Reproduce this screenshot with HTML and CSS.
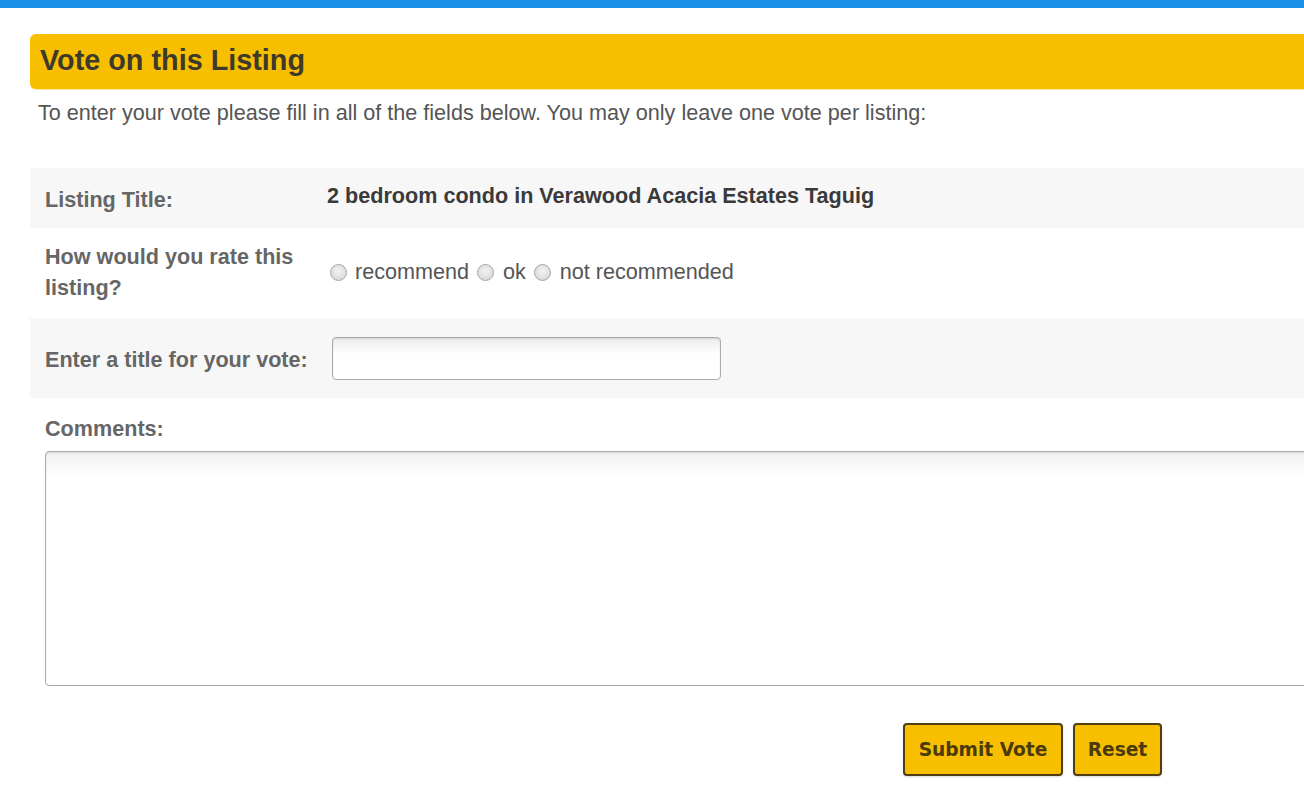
FILE: index.html
```html
<!DOCTYPE html>
<html>
<head>
<meta charset="utf-8">
<link rel="stylesheet" href="styles.css">
</head>
<body>
<div class="topbar"></div>
<div class="page">
  <h2 class="heading">Vote on this Listing</h2>
  <p class="intro">To enter your vote please fill in all of the fields below. You may only leave one vote per listing:</p>
  <form class="form">
    <div class="row row-shade row-title">
      <div class="label">Listing Title:</div>
      <div class="value value-title">2 bedroom condo in Verawood Acacia Estates Taguig</div>
    </div>
    <div class="row row-rate">
      <div class="label">How would you rate this listing?</div>
      <div class="value radios">
        <label class="radio"><span class="dot"></span>recommend</label>
        <label class="radio"><span class="dot"></span>ok</label>
        <label class="radio"><span class="dot"></span>not recommended</label>
      </div>
    </div>
    <div class="row row-shade row-input">
      <div class="label">Enter a title for your vote:</div>
      <div class="value"><div class="textbox"></div></div>
    </div>
    <div class="comments">
      <div class="label">Comments:</div>
      <div class="textarea"></div>
    </div>
    <div class="buttons">
      <button type="button" class="btn btn-submit">Submit Vote</button>
      <button type="button" class="btn btn-reset">Reset</button>
    </div>
  </form>
</div>
</body>
</html>
```

FILE: styles.css
```css
html, body {
  margin: 0;
  padding: 0;
  overflow: hidden;
  background: #ffffff;
}
body {
  width: 1304px;
  height: 794px;
  font-family: "Liberation Sans", Arial, sans-serif;
  color: #555555;
}
.topbar {
  height: 8px;
  background: #1a90e6;
}
.page {
  width: 1400px;
  padding: 26px 0 0 30px;
}
.heading {
  margin: 0;
  height: 55px;
  line-height: 53px;
  background: #f8bf00;
  border-radius: 6px 0 0 6px;
  padding-left: 10px;
  font-size: 28.8px;
  font-weight: bold;
  color: #3d3a2c;
  box-shadow: 0 1px 0 #fbe9a8;
}
.intro {
  margin: 11px 0 0 8px;
  font-size: 21.6px;
  line-height: 26px;
  color: #555;
}
.form {
  margin-top: 42px;
}
.row {
  display: grid;
  grid-template-columns: 297px 1fr;
  align-items: center;
}
.row-shade {
  background: #f7f7f7;
}
.row-title { height: 60px; }
.row-rate { height: 90px; }
.row-input { height: 80px; }
.label {
  padding-left: 15px;
  font-size: 21.6px;
  font-weight: bold;
  color: #666;
  line-height: 31px;
}
.row-title .label { padding-top: 2px; }
.row-rate .label { width: 262px; padding-bottom: 3px; }
.row-input .label { padding-top: 2px; }
.value-title {
  font-size: 21.6px;
  font-weight: bold;
  color: #3a3a3a;
  padding-bottom: 5px;
}
.radios {
  display: flex;
  align-items: center;
  font-size: 21.6px;
  color: #555;
  padding-left: 3px;
  padding-bottom: 2px;
}
.radio {
  display: flex;
  align-items: center;
}
.dot {
  width: 17px;
  height: 17px;
  border-radius: 50%;
  border: 1px solid #a4a4a4;
  background: radial-gradient(circle at 50% 40%, #f3f3f3 0%, #dcdcdc 70%, #c8c8c8 100%);
  margin-right: 8px;
  box-sizing: border-box;
}
.radio + .radio .dot { margin-left: 8px; margin-right: 9px; }
.textbox {
  margin-left: 5px;
  width: 389px;
  height: 43px;
  box-sizing: border-box;
  border: 1px solid #ababab;
  border-radius: 4px;
  background: linear-gradient(#ececec, #ffffff 40%);
  box-shadow: inset 0 1px 2px rgba(0,0,0,0.12);
}
.comments {
  padding-top: 14px;
}
.comments .label {
  line-height: 34px;
}
.textarea {
  margin: 5px 0 0 15px;
  height: 235px;
  box-sizing: border-box;
  border: 1px solid #aaaaaa;
  border-radius: 4px;
  background: linear-gradient(#efefef, #ffffff 24px);
  box-shadow: inset 0 1px 2px rgba(0,0,0,0.1);
}
.buttons {
  display: flex;
  gap: 10px;
  padding: 37px 0 0 873px;
}
.btn {
  height: 53px;
  background: #f8bf00;
  border: 2px solid #4f3f12;
  border-radius: 4px;
  font-family: "DejaVu Sans", Verdana, sans-serif;
  font-weight: bold;
  font-size: 18.6px;
  color: #4a3a0c;
  padding: 0 10px;
  box-shadow: 0 1px 2px rgba(0,0,0,0.15);
}
.btn-submit { width: 160px; }
.btn-reset { width: 89px; }
```
